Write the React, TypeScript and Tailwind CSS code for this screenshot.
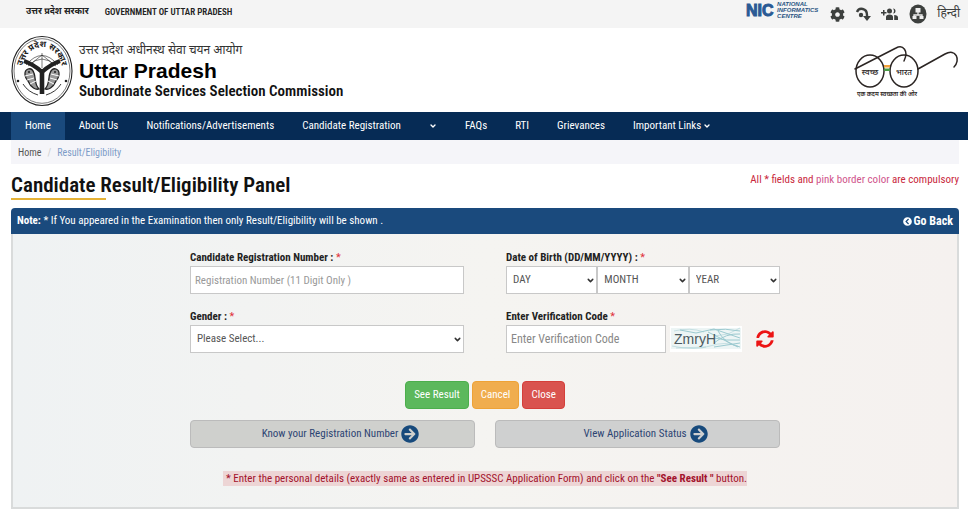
import type { ReactNode } from 'react';
import { FaArrowCircleRight, FaChevronCircleLeft, FaCog, FaSyncAlt } from 'react-icons/fa';
import { ChevronDown } from 'lucide-react';

const hindi = 'font-["Noto_Sans_Devanagari","Noto_Sans",sans-serif]';

function Emblem() {
  return (
    <svg viewBox="0 0 62 72" className="h-[72px] w-[62px] shrink-0" role="img" aria-label="State emblem">
      <g fill="none" stroke="#222">
        <ellipse cx="31" cy="36" rx="30" ry="34.5" strokeWidth="1.1" />
        <ellipse cx="31" cy="36" rx="28" ry="32.3" strokeWidth=".6" />
        <path d="M15 30Q31 11 47 30M17 31Q31 17 45 31M31 18V33M31 20L21 28M31 20L41 28" strokeWidth=".6" />
        <path d="M13 26Q22 29 31 37Q40 29 49 26" strokeWidth="4" />
        <path d="M31 34V59" strokeWidth="4.6" />
        <path d="M17 34C12 36 14 43 17 46C20 53 25 55 28 54C23 49 25 43 23 38C22 35 20 33 17 34Z" fill="#999" strokeWidth="1.3" />
        <path d="M45 34C50 36 48 43 45 46C42 53 37 55 34 54C39 49 37 43 39 38C40 35 42 33 45 34Z" fill="#999" strokeWidth="1.3" />
        <path d="M14 41L22 39M16 45L23 43M19 49L25 46M48 41L40 39M46 45L39 43M43 49L37 46" stroke="#fff" strokeWidth="1" />
        <path d="M12 49Q17 57 27 60M50 49Q45 57 35 60" strokeWidth=".9" />
      </g>
      <g fill="#222">
        <circle cx="18" cy="37" r="1" />
        <circle cx="44" cy="37" r="1" />
        <circle cx="7" cy="46" r="1.3" />
        <circle cx="55" cy="46" r="1.3" />
      </g>
      <path id="emblem-arc" d="M10 40A21 28 0 0 1 52 40" fill="none" />
      <text className={hindi} fontSize="8.500" fontWeight="700" fill="#222" textAnchor="middle">
        <textPath href="#emblem-arc" startOffset="50%">उत्तर प्रदेश सरकार</textPath>
      </text>
    </svg>
  );
}

function SwachhBharat() {
  return (
    <svg viewBox="0 0 106 58" className="mt-1 h-[58px] w-[106px] shrink-0" role="img" aria-label="स्वच्छ भारत">
      <g fill="none" stroke="#2b2523" strokeWidth="1.500" strokeLinecap="round">
        <ellipse cx="17" cy="27" rx="14" ry="16" />
        <ellipse cx="51" cy="27" rx="14" ry="16" />
        <path d="M2 25L43 4C50 0 56 7 51 17" />
        <path d="M65 25L92 10C103 4 108 16 101 23" />
      </g>
      <path d="M31 21H37V23.500H31Z" fill="#f0a23c" />
      <path d="M31 24.500H37V27H31Z" fill="#4a9c45" />
      <g className={hindi} fill="#2b2523" textAnchor="middle">
        <text x="17" y="31" fontSize="8" fontWeight="500">स्वच्छ</text>
        <text x="51" y="31" fontSize="8" fontWeight="500">भारत</text>
        <text x="34" y="52" fontSize="6" fontWeight="600">एक कदम स्वच्छता की ओर</text>
      </g>
    </svg>
  );
}

function TopBar() {
  return (
    <div className="flex h-7 items-center justify-between bg-[#f4f4f4] pr-2 pl-[26px] text-[#222]">
      <div className="flex items-center gap-4 pb-1">
        <span className={`${hindi} text-[9px] leading-4 font-bold`}>उत्तर प्रदेश सरकार</span>
        <span className="text-[9px] leading-4 font-semibold">GOVERNMENT OF UTTAR PRADESH</span>
      </div>
      <div className="flex items-center gap-[10px] text-[#3d403e]">
        <a href="#nic" aria-label="National Informatics Centre" className="mr-[2px] flex items-center gap-[2px] pb-2 text-[#2a5583]">
          <svg viewBox="0 0 30 17" className="h-[17px] w-[30px]" aria-hidden="true">
            <text x="1" y="14" fontSize="16" fontFamily="Liberation Sans, sans-serif" fontWeight="700" fill="#2a5a94" stroke="#2a5a94" strokeWidth="1">NIC</text>
          </svg>
          <span className="flex flex-col font-['Liberation_Sans',sans-serif] text-[6px] leading-[6px] font-bold italic">
            <span>NATIONAL</span>
            <span>INFORMATICS</span>
            <span>CENTRE</span>
          </span>
        </a>
        <button type="button" aria-label="Settings"><FaCog size={15} /></button>
        <button type="button" aria-label="Skip to content">
          <svg viewBox="0 0 16 16" className="size-4" fill="none" stroke="currentColor">
            <path d="M2 6C4 1 12 2 12 9V12" strokeWidth="2.400" />
            <path d="M8 10H16L12 15Z" fill="currentColor" stroke="none" />
            <circle cx="6" cy="9" r="2.200" fill="currentColor" stroke="none" />
          </svg>
        </button>
        <button type="button" aria-label="Register">
          <svg viewBox="0 0 18 14" className="h-[14px] w-[18px]" fill="currentColor">
            <path d="M0 5H2V3H3.500V5H5.500V6.500H3.500V8.500H2V6.500H0Z" />
            <circle cx="8.500" cy="4" r="2.500" />
            <path d="M12 1.500A2.500 2.500 0 0 1 12 6.500A4 4 0 0 0 12 1.500Z" />
            <path d="M5 13V10Q5 7.500 8.500 7.500Q12 7.500 12 10V13ZM13.200 13V8Q17 8 17 10.500V13Z" />
          </svg>
        </button>
        <button type="button" aria-label="Sitemap">
          <svg viewBox="0 0 18 20" className="h-5 w-[18px]">
            <ellipse cx="9" cy="10" rx="8.500" ry="9.500" fill="#3d403e" />
            <path d="M9 8V11M5 13V11H13V13" fill="none" stroke="#eee" strokeWidth="1.300" />
            <path d="M6.500 4H11.500V8.500H6.500ZM3.500 12H7.500V15H3.500ZM10.500 12H14.500V15H10.500Z" fill="#eee" />
          </svg>
        </button>
        <a href="#hindi" className={`${hindi} text-xs leading-5`}>हिन्दी</a>
      </div>
    </div>
  );
}

const navItems = [
  { label: 'Home', active: true },
  { label: 'About Us' },
  { label: 'Notifications/Advertisements' },
  { label: 'Candidate Registration' },
  { label: '', menu: true },
  { label: 'FAQs' },
  { label: 'RTI' },
  { label: 'Grievances' },
  { label: 'Important Links', menu: true },
];

function Nav() {
  return (
    <nav className="flex h-7 bg-[#062b55] pl-[11px] text-white">
      {navItems.map((item, i) => (
        <a
          key={i}
          href="#nav"
          aria-label={item.label || 'More'}
          className={`flex items-center gap-[2px] px-[14px] whitespace-nowrap ${item.active ? 'bg-[#1a4a7d]' : ''}`}
        >
          {item.label}
          {item.menu && <ChevronDown size={8} strokeWidth={4} />}
        </a>
      ))}
    </nav>
  );
}

function Label({ htmlFor, children }: { htmlFor: string; children: ReactNode }) {
  return (
    <label htmlFor={htmlFor} className="block leading-4 font-bold text-[#222]">
      {children} <span className="font-normal text-[#e0303a]">*</span>
    </label>
  );
}

function Select({ id, label, text }: { id: string; label?: string; text: string }) {
  return (
    <div className="relative min-w-0 flex-1">
      <select
        id={id}
        aria-label={label}
        className="block h-7 w-full appearance-none border border-[#c8c8c8] bg-white px-[6px] text-[#555]"
      >
        <option>{text}</option>
      </select>
      <ChevronDown size={9} strokeWidth={4} className="pointer-events-none absolute top-[10px] right-[2px] text-[#333]" />
    </div>
  );
}

function Captcha() {
  return (
    <svg viewBox="0 0 72 26" className="h-[26px] w-[72px] shrink-0 bg-white" role="img" aria-label="Verification image">
      <rect x="1" y="2" width="70" height="21" fill="#edf5f5" />
      <g fill="none" stroke="#9ccad0" strokeWidth="1">
        <path d="M10 4L26 7L44 3L70 12M38 6L68 21M44 17Q56 7 70 8M44 21L70 17M48 5Q55 18 70 21M44 12Q56 15 70 14M40 4Q56 2 70 5" />
        <path d="M4 5Q20 1 34 6M2 20Q25 25 40 20T68 20M6 22L36 21M44 10L58 8L70 2" opacity=".5" />
      </g>
      <text x="4" y="18" fontSize="14" fill="#4b5960" fontFamily="Liberation Sans, sans-serif">ZmryH</text>
    </svg>
  );
}

export default function App() {
  return (
    <div className="bg-white font-['Roboto_Condensed','Liberation_Sans',Arial,sans-serif] text-[11px]">
      <TopBar />
      <header className="flex h-[84px] items-center justify-between pt-[2px] pr-[9px] pl-[11px]">
        <div className="flex items-center gap-[6px]">
          <Emblem />
          <div>
            <p className={`${hindi} text-xs leading-4 text-[#333]`}>उत्तर प्रदेश अधीनस्थ सेवा चयन आयोग</p>
            <p className="font-['Liberation_Sans',sans-serif] text-[21px] leading-6 font-bold text-black">Uttar Pradesh</p>
            <p className="text-[15px] leading-4 font-semibold text-[#111]">Subordinate Services Selection Commission</p>
          </div>
        </div>
        <SwachhBharat />
      </header>
      <Nav />
      <main className="mr-[9px] ml-[11px]">
        <div className="flex h-6 items-center gap-[6px] bg-[#f5f5f9] px-[7px] text-[10px]">
          <a href="#home" className="text-[#555]">Home</a>
          <span className="text-[#ccc]">/</span>
          <span className="text-[#7d9cc8]">Result/Eligibility</span>
        </div>
        <div className="flex h-11 items-start justify-between pt-2">
          <h1 className="text-[21px] leading-[26px] font-semibold text-[#111]">
            Candidate Result/Eligibility Panel
            <span className="block h-[2px] w-[95px] bg-[#e5b236]" />
          </h1>
          <p className="leading-4 text-[#c9283c]">
            All * fields and <span className="text-[#d0558c]">pink border color</span> are compulsory
          </p>
        </div>
        <div className="flex h-[26px] items-center justify-between rounded-t-sm bg-[#1a4a7d] px-[6px] text-white">
          <p><b>Note:</b> * If You appeared in the Examination then only Result/Eligibility will be shown .</p>
          <a href="#back" className="flex items-center gap-[2px] text-xs font-bold"><FaChevronCircleLeft size={9} /> Go Back</a>
        </div>
        <section className="border-2 border-t-0 border-[#d9dbdb] bg-linear-to-r from-[#eff2f3] via-[#f5f4f1] to-[#f5f1ef] pt-4 pb-5">
          <form className="mx-auto max-w-[590px]">
            <div className="grid grid-cols-2 gap-x-[42px] gap-y-[15px]">
              <div>
                <Label htmlFor="reg">Candidate Registration Number :</Label>
                <input id="reg" placeholder="Registration Number (11 Digit Only )" className="block h-7 w-full border border-[#c8c8c8] bg-white px-1 placeholder:text-[#999]" />
              </div>
              <div>
                <Label htmlFor="day">Date of Birth (DD/MM/YYYY) :</Label>
                <div className="flex">
                  <Select id="day" text="DAY" />
                  <Select id="month" label="Month" text="MONTH" />
                  <Select id="year" label="Year" text="YEAR" />
                </div>
              </div>
              <div>
                <Label htmlFor="gender">Gender :</Label>
                <div className="flex"><Select id="gender" text="Please Select..." /></div>
              </div>
              <div>
                <Label htmlFor="code">Enter Verification Code</Label>
                <div className="flex items-center">
                  <input id="code" placeholder="Enter Verification Code" className="mr-1 block h-7 min-w-0 flex-1 border border-[#c8c8c8] bg-white px-1 text-xs placeholder:text-[#888]" />
                  <Captcha />
                  <button type="button" aria-label="Refresh code" className="mr-[6px] ml-[14px] text-[#ec1414]"><FaSyncAlt size={18} /></button>
                </div>
              </div>
            </div>
            <div className="mt-7 flex justify-center gap-[3px] text-white">
              <button type="submit" className="h-7 rounded-sm border border-[#4cae4c] bg-[#5cb85c] px-2 whitespace-nowrap">See Result</button>
              <button type="reset" className="h-7 rounded-sm border border-[#eea236] bg-[#f0ad4e] px-2 whitespace-nowrap">Cancel</button>
              <button type="button" className="h-7 rounded-sm border border-[#d43f3a] bg-[#d9534f] px-2 whitespace-nowrap">Close</button>
            </div>
            <div className="mt-[11px] grid grid-cols-2 gap-5 text-[#2d4573]">
              <button type="button" className="flex h-7 items-center justify-center gap-[3px] rounded-sm border border-[#bbb] bg-[#cfd0cd] pl-4">
                Know your Registration Number <FaArrowCircleRight size={18} className="text-[#174a7c]" />
              </button>
              <button type="button" className="flex h-7 items-center justify-center gap-[3px] rounded-sm border border-[#bbb] bg-[#cfd0d0] pl-4">
                View Application Status <FaArrowCircleRight size={18} className="text-[#174a7c]" />
              </button>
            </div>
            <p className="mt-[23px] text-center leading-4 text-[#a3122c]">
              <span className="bg-[#edd5d5] py-px pl-[3px]">
                * Enter the personal details (exactly same as entered in UPSSSC Application Form) and click on the <b>"See Result "</b> button.
              </span>
            </p>
          </form>
        </section>
      </main>
    </div>
  );
}
